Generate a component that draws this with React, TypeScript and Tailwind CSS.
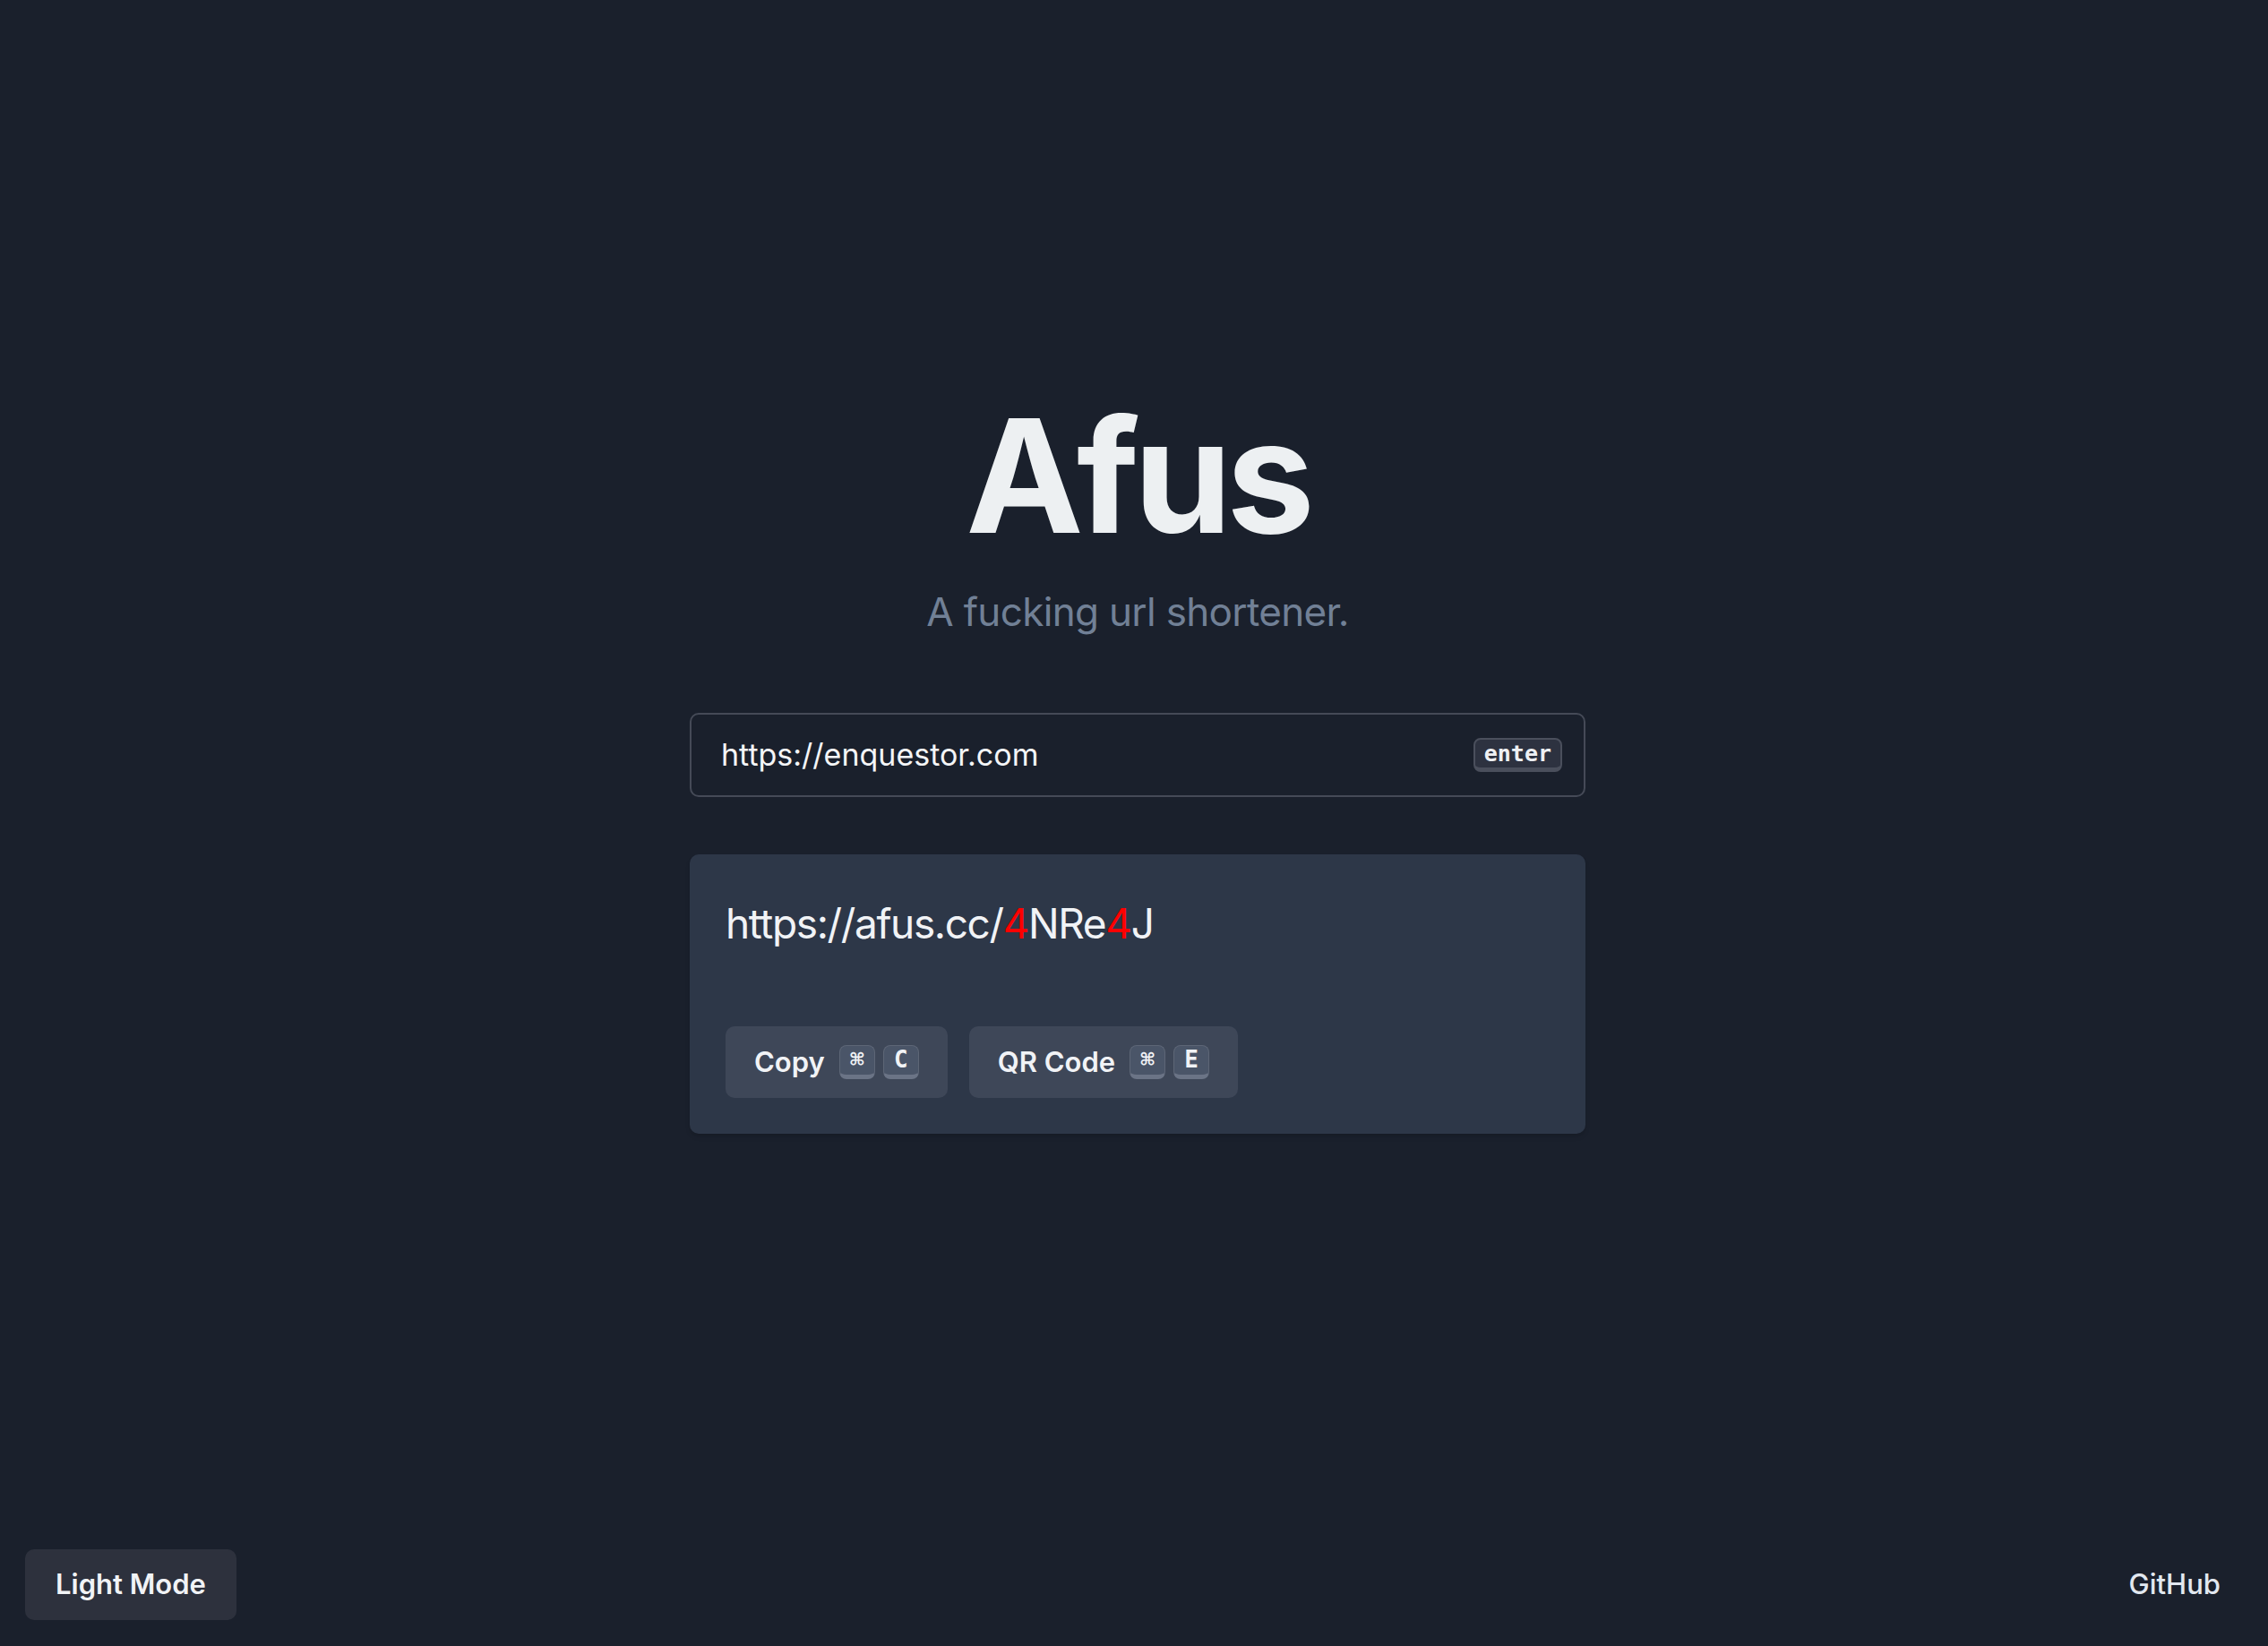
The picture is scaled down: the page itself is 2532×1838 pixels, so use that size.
import { useState } from "react";

const Key = ({ children }: { children: string }) => (
  <kbd className="flex h-[38px] w-[40px] items-center justify-center rounded-[8px] border border-[#5d6676] border-b-[5px] border-b-[#6b7486] bg-[#4a5568] pb-[2px] font-['DejaVu_Sans_Mono','DejaVu_Sans',monospace] text-[26px] font-bold leading-none text-[#f1f3f6]">
    {children}
  </kbd>
);

const ActionButton = ({ label, hotkey }: { label: string; hotkey: string }) => (
  <button className="flex h-[80px] items-center gap-4 rounded-[10px] bg-[#3e4758] px-8 text-[31px] font-semibold text-[#f1f3f6]">
    <span>{label}</span>
    <span className="flex gap-[9px]">
      <Key>⌘</Key>
      <Key>{hotkey}</Key>
    </span>
  </button>
);

export default function App() {
  const [url, setUrl] = useState("https://enquestor.com");

  return (
    <div className="flex h-screen flex-col bg-[#1a202c] font-['Inter',sans-serif]">
      <main className="flex flex-1 flex-col items-center pl-2 pt-[443px]">
        <h1 className="text-[176px] font-bold leading-none tracking-[-0.035em] text-[#edf0f2]">Afus</h1>
        <p className="mt-[38px] text-[44px] leading-[1.2] tracking-[-0.015em] text-[#718096]">A fucking url shortener.</p>

        <div className="mt-[86px] flex h-[94px] w-[1000px] items-center rounded-[10px] border-2 border-[#454a57] pl-[33px] pr-[24px]">
          <input
            value={url}
            onChange={(e) => setUrl(e.target.value)}
            className="flex-1 bg-transparent text-[34px] text-[#f4f5f7] outline-none"
          />
          <kbd className="flex h-[38px] items-center rounded-[8px] border-2 border-[#4a4f5c] border-b-[5px] bg-[#2d3240] px-[10px] font-['DejaVu_Sans_Mono',monospace] text-[25px] font-bold leading-none text-[#eef0f3]">
            enter
          </kbd>
        </div>

        <div className="mt-[64px] w-[1000px] rounded-[10px] bg-[#2d3748] px-10 pb-10 pt-[43px] shadow-md">
          <p className="text-[46px] leading-[1.5] tracking-[-0.03em] text-[#f1f3f6]">
            https://afus.cc/<span className="text-[#ff0000]">4</span>NRe<span className="text-[#ff0000]">4</span>J
          </p>
          <div className="mt-20 flex gap-6">
            <ActionButton label="Copy" hotkey="C" />
            <ActionButton label="QR Code" hotkey="E" />
          </div>
        </div>
      </main>

      <footer className="flex items-center justify-between px-[28px] pb-[29px]">
        <button className="h-[79px] rounded-[10px] bg-[#2d313d] px-[34px] text-[31px] font-semibold text-[#f1f3f6]">
          Light Mode
        </button>
        <a href="#" className="pr-[25px] text-[31px] font-medium text-[#e2e8f0]">
          GitHub
        </a>
      </footer>
    </div>
  );
}
